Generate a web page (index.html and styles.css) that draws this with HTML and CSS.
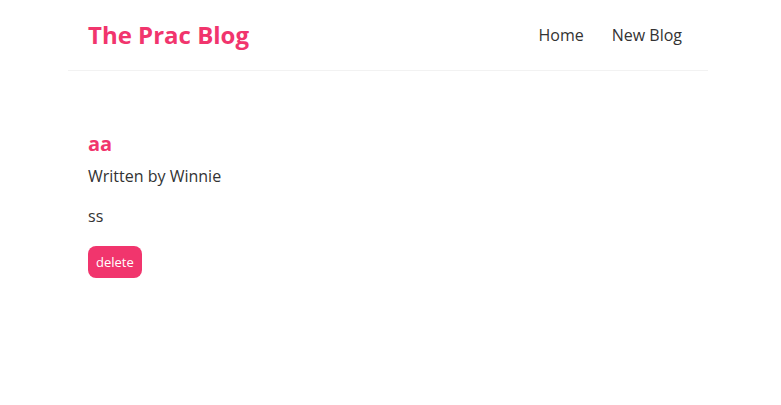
FILE: index.html
```html
<!DOCTYPE html>
<html lang="en">
<head>
<meta charset="utf-8">
<title>The Prac Blog</title>
<link rel="stylesheet" href="styles.css">
</head>
<body>
<div class="app">
  <nav class="navbar">
    <h1 class="brand">The Prac Blog</h1>
    <div class="links">
      <a href="#" class="link">Home</a>
      <a href="#" class="link">New Blog</a>
    </div>
  </nav>
  <main class="content">
    <article class="blog-details">
      <h2 class="title">aa</h2>
      <p class="author">Written by Winnie</p>
      <div class="body">ss</div>
      <button class="delete">delete</button>
    </article>
  </main>
</div>
</body>
</html>
```
FILE: styles.css
```css
* {
  margin: 0;
  font-family: "Open Sans", sans-serif;
  color: #333;
}
body {
  margin: 0;
  background: #fff;
}
.app {
  margin-right: 5px;
}
.navbar {
  padding: 20px;
  display: flex;
  align-items: center;
  max-width: 600px;
  margin: 0 auto;
  border-bottom: 1px solid #f2f2f2;
}
.brand {
  color: #f1356d;
  font-size: 24px;
  font-weight: 700;
  line-height: 30px;
}
.links {
  margin-left: auto;
  display: flex;
}
.link {
  margin-left: 16px;
  text-decoration: none;
  padding: 6px;
  font-size: 16px;
  line-height: 18px;
}
.content {
  max-width: 600px;
  margin: 40px auto;
  padding: 20px;
}
.title {
  font-size: 20px;
  line-height: 25px;
  color: #f1356d;
  margin-bottom: 10px;
  font-weight: 700;
}
.author {
  font-size: 16px;
  line-height: 20px;
}
.body {
  margin: 20px 0;
  font-size: 16px;
  line-height: 20px;
}
.delete {
  background: #f1356d;
  color: #fff;
  border: 0;
  padding: 8px;
  border-radius: 8px;
  font-size: 13px;
  line-height: 16px;
  cursor: pointer;
}
```
